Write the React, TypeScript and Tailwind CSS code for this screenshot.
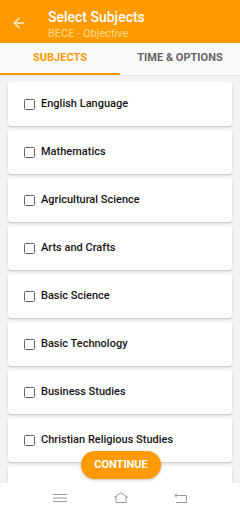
import { ArrowLeft } from "lucide-react";

const SUBJECTS = [
  "English Language",
  "Mathematics",
  "Agricultural Science",
  "Arts and Crafts",
  "Basic Science",
  "Basic Technology",
  "Business Studies",
  "Christian Religious Studies",
];

export default function App() {
  return (
    <div className="h-[512px] w-[240px] flex flex-col overflow-hidden bg-[#f2f2f2] font-['Roboto',sans-serif]">
      <header className="h-[43px] shrink-0 bg-[#ff9b00] flex items-start">
        <div className="w-[48px] flex items-center pl-[11px] pt-[15px]">
          <ArrowLeft className="w-[16px] h-[16px] text-[#fff3de]" strokeWidth={2} />
        </div>
        <div className="flex flex-col leading-none pt-[10px]">
          <span className="text-white text-[14px] font-medium">Select Subjects</span>
          <span className="text-[#ffd98c] text-[11px] mt-[4px]">BECE - Objective</span>
        </div>
      </header>

      <nav className="h-[33px] shrink-0 bg-[#fafafa] border-b border-[#e3e3e3] flex">
        <div className="w-1/2 flex flex-col">
          <div className="flex-1 flex items-center justify-center text-[11px] font-bold text-[#ff9b00]">
            SUBJECTS
          </div>
          <div className="h-[2px] bg-[#ff9b00]" />
        </div>
        <div className="w-1/2 flex items-center justify-center pb-[2px] text-[11px] font-bold text-[#666666]">
          TIME &amp; OPTIONS
        </div>
      </nav>

      <main className="relative flex-1 overflow-hidden px-2 pt-[6px] flex flex-col gap-1">
        {SUBJECTS.map((s) => (
          <div
            key={s}
            className="h-[44px] shrink-0 rounded-[3px] bg-white shadow-[0_1px_2px_rgba(0,0,0,0.18)] flex items-center pl-4 gap-[6px]"
          >
            <span className="w-[11px] h-[11px] border-[1.5px] border-[#616161] rounded-[1.5px]" />
            <span className="text-[11px] font-medium text-[#161616]">{s}</span>
          </div>
        ))}
        {/* next card, scrolled below the fold */}
        <div className="h-[44px] shrink-0 rounded-[3px] bg-white shadow-[0_1px_2px_rgba(0,0,0,0.18)]" />
        <button
          type="button"
          className="absolute left-[81px] bottom-[4px] w-[80px] h-[28px] rounded-full bg-[#ff9b00] text-white text-[11px] font-bold shadow-[0_1px_3px_rgba(0,0,0,0.25)]"
        >
          CONTINUE
        </button>
      </main>

      <footer className="h-[29px] shrink-0 bg-white flex items-center justify-between px-[53px]">
        <svg width="14" height="10" viewBox="0 0 14 10" fill="none" stroke="#9a9a9a" strokeWidth="1">
          <path d="M0 1.5h14M0 5h14M0 8.5h14" />
        </svg>
        <svg width="16" height="11" viewBox="0 0 16 11" fill="none" stroke="#9a9a9a" strokeWidth="1">
          <path d="M1 5.5L8 0.8L15 5.5M3 4.2V10.5H13V4.2" />
        </svg>
        <svg width="13" height="10" viewBox="0 0 13 10" fill="none" stroke="#9a9a9a" strokeWidth="1">
          <path d="M3 0.5L0.8 2.5L3 4.5M0.8 2.5H12.5V9.5H2" />
        </svg>
      </footer>
    </div>
  );
}
